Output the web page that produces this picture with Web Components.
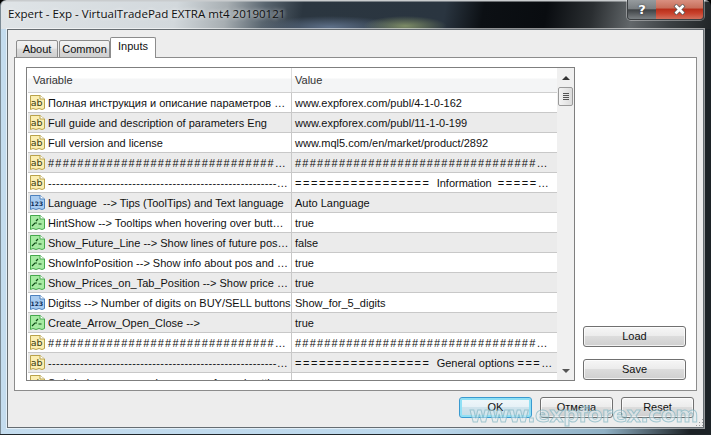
<!DOCTYPE html>
<html>
<head>
<meta charset="utf-8">
<title>Expert</title>
<style>
html, body { margin: 0; padding: 0; background: #000; }
body { width: 711px; height: 435px; overflow: hidden; font-family: "Liberation Sans", sans-serif; }
</style>
</head>
<body>
<mt-window caption="Expert - Exp - VirtualTradePad EXTRA mt4 20190121">
  <mt-tabs></mt-tabs>
  <mt-panel>
    <mt-table></mt-table>
    <mt-button slot="side" label="Load"></mt-button>
    <mt-button slot="side" label="Save"></mt-button>
  </mt-panel>
  <mt-button slot="foot" label="OK" primary></mt-button>
  <mt-button slot="foot" label="Отмена"></mt-button>
  <mt-button slot="foot" label="Reset"></mt-button>
</mt-window>

<script>
// window frame with aero title bar
class MtWindow extends HTMLElement {
    constructor() {
        super();
        const shadowRoot = this.attachShadow({ mode: 'open' });
        shadowRoot.innerHTML = `
            <style>
                :host {
                    display: flex;
                    flex-direction: column;
                    position: relative;
                    width: 711px;
                    height: 435px;
                    box-sizing: border-box;
                    padding: 0 7px 7px 7px;
                    border-radius: 6px 6px 0 0;
                    overflow: hidden;
                    box-shadow: inset 0 -1px #20262a, inset 1px 0 #7b8a94;
                    background:
                        radial-gradient(ellipse 42px 10px at 405px 26px, #7d8c66, transparent),
                        radial-gradient(ellipse 70px 11px at 330px 27px, #5d6f88, transparent),
                        linear-gradient(180deg, #c9ccce 0, #c9ccce 1px, transparent 2px),
                        linear-gradient(100deg, #dfe4e7 0, #d2d8dc 175px, #a7aeb2 225px, #5a6670 262px, #2b3640 300px, #2a3540 440px, #0c1014 478px, #090c10 540px, #2a2e31 585px, #62676a 625px, #3a3f42 665px, #1e2224 711px) 0 0 / 100% 29px no-repeat,
                        linear-gradient(90deg, #c4dcee 0, #bcd8ec 60%, #8fb0c4 85%, #1c2226 97%);
                }
                #bar {
                    height: 29px;
                    flex: none;
                    display: flex;
                    align-items: flex-start;
                    justify-content: space-between;
                }
                #caption {
                    font: 11.55px/1 "Open Sans", sans-serif;
                    color: #111;
                    margin: 8px 0 0 1px;
                    text-shadow: 0 0 4px #fff;
                    white-space: nowrap;
                }
                #ctl {
                    display: flex;
                    height: 20px;
                    box-sizing: border-box;
                    border: 1px solid #3c4043;
                    border-top: 0;
                    border-radius: 0 0 4px 4px;
                    overflow: hidden;
                    box-shadow: 0 0 0 1px rgba(255,255,255,.35);
                }
                #ctl span {
                    display: flex;
                    align-items: center;
                    justify-content: center;
                }
                #help {
                    width: 28px;
                    font: bold 13px/1 "DejaVu Sans", sans-serif;
                    color: #fff;
                    text-shadow: 0 0 2px #333;
                    background: linear-gradient(#969b9e, #7a7f82 45%, #3f4346 52%, #7c8184);
                }
                #close { width: 47px; background: linear-gradient(#d99080, #c8705c 40%, #b9301b 50%, #c9412c 70%, #d2705c); }
                #client {
                    flex: 1;
                    display: flex;
                    flex-direction: column;
                    min-height: 0;
                    background: #ededed;
                    border: 1px solid #666d72;
                    box-shadow: 0 0 0 1px rgba(255,255,255,.55);
                }
                #foot {
                    flex: none;
                    height: 36px;
                    display: flex;
                    justify-content: flex-end;
                    gap: 8px;
                    padding: 6px 9px 0 0;
                    box-sizing: border-box;
                    --btn-w: 73px;
                }
                #mark {
                    position: absolute;
                    right: 13px;
                    bottom: 9px;
                    font: bold 22px/1 "DejaVu Sans", sans-serif;
                    letter-spacing: -.5px;
                    color: rgba(225, 238, 242, .5);
                    -webkit-text-stroke: 1px rgba(125, 178, 192, .65);
                    filter: blur(.5px);
                    white-space: nowrap;
                }
                #grip {
                    position: absolute;
                    right: 8px;
                    bottom: 9px;
                    width: 8px;
                    height: 8px;
                    background: radial-gradient(circle, #9a9a9a 0, #9a9a9a 1px, transparent 1px) 0 0 / 3px 3px;
                    clip-path: polygon(100% 0, 100% 100%, 0 100%);
                }
            </style>
            <div id="bar">
                <div id="caption">${this.getAttribute('caption')}</div>
                <div id="ctl">
                    <span id="help">?</span>
                    <span id="close"><svg width="13" height="11" viewBox="0 0 13 11"><path d="M2 1 L11 10 M11 1 L2 10" stroke="#555" stroke-width="4"/><path d="M2.5 1.5 L10.5 9.5 M10.5 1.5 L2.5 9.5" stroke="#fff" stroke-width="2.6"/></svg></span>
                </div>
            </div>
            <div id="client">
                <slot></slot>
                <div id="foot"><slot name="foot"></slot></div>
            </div>
            <div id="mark">www.expforex.com</div>
            <div id="grip"></div>
        `;
    }
}

// About / Common / Inputs strip
class MtTabs extends HTMLElement {
    constructor() {
        super();
        const shadowRoot = this.attachShadow({ mode: 'open' });
        shadowRoot.innerHTML = `
            <style>
                :host {
                    display: flex;
                    align-items: flex-end;
                    height: 28px;
                    flex: none;
                    padding-left: 8px;
                    box-sizing: border-box;
                    font: 11px/1 "Liberation Sans", sans-serif;
                    color: #111;
                    position: relative;
                    z-index: 1;
                    margin-bottom: -1px;
                }
                div {
                    height: 18px;
                    box-sizing: border-box;
                    display: flex;
                    align-items: center;
                    justify-content: center;
                    border: 1px solid #8c8c8c;
                    border-radius: 2px 2px 0 0;
                    background: linear-gradient(#f2f2f2, #ebebeb 45%, #dcdcdc 50%, #cfcfcf);
                }
                #inputs {
                    height: 21px;
                    padding-bottom: 3px;
                    border-bottom: 0;
                    background: #fff;
                }
            </style>
            <div style="width:42px">About</div>
            <div style="width:51px;margin-left:1px">Common</div>
            <div id="inputs" style="width:46px">Inputs</div>
        `;
    }
}

// white tab page, table at left, Load/Save at right
class MtPanel extends HTMLElement {
    constructor() {
        super();
        const shadowRoot = this.attachShadow({ mode: 'open' });
        shadowRoot.innerHTML = `
            <style>
                :host {
                    display: flex;
                    flex: 1;
                    min-height: 0;
                    margin: 0 6px;
                    padding: 9px 10px 9px 11px;
                    box-sizing: border-box;
                    background: #fff;
                    border: 1px solid #8c8c8c;
                    gap: 8px;
                    --btn-w: 103px;
                }
                #side {
                    display: flex;
                    flex-direction: column;
                    justify-content: flex-end;
                    gap: 12px;
                    flex: none;
                    padding-bottom: 1px;
                }
            </style>
            <slot></slot>
            <div id="side"><slot name="side"></slot></div>
        `;
    }
}

// grid of expert inputs with its scrollbar
class MtTable extends HTMLElement {
    constructor() {
        super();
        const shadowRoot = this.attachShadow({ mode: 'open' });
        const hash = n => '<span class="hash">' + '#'.repeat(n) + '</span>…';
        const dash = '<span class="dash">' + '-'.repeat(57) + '</span>…';
        const eq = n => '<span class="eq">' + '='.repeat(n) + '</span>';
        const rows = [
            ['ab', 'Полная инструкция и описание параметров …', 'www.expforex.com/publ/4-1-0-162'],
            ['ab', 'Full guide and description of parameters Eng', 'www.expforex.com/publ/11-1-0-199'],
            ['ab', 'Full version and license', 'www.mql5.com/en/market/product/2892'],
            ['ab', hash(31), hash(33)],
            ['ab', dash, eq(17) + ' &nbsp;Information &nbsp;' + eq(5) + '…'],
            ['123', 'Language &nbsp;--&gt; Tips (ToolTips) and Text language', 'Auto Language'],
            ['b', 'HintShow --&gt; Tooltips when hovering over butt…', 'true'],
            ['b', 'Show_Future_Line --&gt; Show lines of future pos…', 'false'],
            ['b', 'ShowInfoPosition --&gt; Show info about pos and …', 'true'],
            ['b', 'Show_Prices_on_Tab_Position --&gt; Show price …', 'true'],
            ['123', 'Digitss --&gt; Number of digits on BUY/SELL buttons', 'Show_for_5_digits'],
            ['b', 'Create_Arrow_Open_Close --&gt;', 'true'],
            ['ab', hash(31), hash(33)],
            ['ab', dash, eq(17) + ' &nbsp;General options ' + eq(3) + '…'],
            ['ab', 'Switch_Language --&gt; Language of panel settings', ''],
        ];
        shadowRoot.innerHTML = `
            <style>
                :host {
                    display: block;
                    flex: none;
                    width: 549px;
                    height: 314px;
                    box-sizing: border-box;
                    border: 1px solid #7f7f7f;
                    position: relative;
                    overflow: hidden;
                    background: #fff;
                    font: 11px/1 "Liberation Sans", sans-serif;
                    color: #111;
                }
                #wrap { display: flex; height: 100%; }
                #list { width: 530px; flex: none; overflow: hidden; padding-left: 1px; box-sizing: border-box; }
                #head {
                    display: grid;
                    grid-template-columns: 263px 1fr;
                    height: 25px;
                    border-bottom: 1px solid #cfcfcf;
                    box-sizing: border-box;
                    background: linear-gradient(#fff 0, #fff 10px, #f4f5f6 11px, #f4f5f6 100%);
                    color: #333;
                }
                #head div { display: flex; align-items: center; padding: 1px 0 0 5px; }
                #head div + div { border-left: 1px solid #ddd; padding-left: 3px; }
                .row {
                    display: grid;
                    grid-template-columns: 263px 1fr;
                    height: 20px;
                    box-sizing: border-box;
                    border-bottom: 1px solid #c8c8c8;
                }
                .row:nth-child(even) { background: #ebebeb; }
                .name, .val {
                    display: flex;
                    align-items: center;
                    white-space: nowrap;
                    overflow: hidden;
                }
                .name { padding-left: 1px; gap: 3px; }
                .val { border-left: 1px solid #c8c8c8; padding: 1px 0 0 3px; white-space: pre; display: block; line-height: 18px; }
                .hash { letter-spacing: 1.2px; }
                .dash { letter-spacing: .35px; }
                .eq { letter-spacing: 1.55px; }
                svg { flex: none; display: block; }
                #bar {
                    flex: 1;
                    background: #f0f0f0;
                    position: relative;
                    display: flex;
                    flex-direction: column;
                    justify-content: space-between;
                    align-items: center;
                    padding: 8px 0 7px;
                    box-sizing: border-box;
                }
                #thumb {
                    position: absolute;
                    left: 1px;
                    top: 19px;
                    width: 15px;
                    height: 19px;
                    box-sizing: border-box;
                    border: 1px solid #9a9a9a;
                    border-radius: 2px;
                    background: linear-gradient(90deg, #f4f4f4, #dcdcdc);
                    display: flex;
                    flex-direction: column;
                    align-items: center;
                    justify-content: center;
                    gap: 1px;
                }
                #thumb i { display: block; width: 6px; height: 1px; background: #555; }
                .tri { width: 0; height: 0; border: 4px solid transparent; }
                #up { border-bottom: 4px solid #333; border-top: 0; }
                #down { border-top: 4px solid #555; border-bottom: 0; }
            </style>
            <div id="wrap">
                <div id="list">
                    <div id="head"><div>Variable</div><div>Value</div></div>
                    <div>
                        ${rows.map(r => `<div class="row"><div class="name">${icon(r[0])}<span style="padding-top:1px">${r[1]}</span></div><div class="val">${r[2]}</div></div>`).join('')}
                    </div>
                </div>
                <div id="bar">
                    <div class="tri" id="up"></div>
                    <div id="thumb"><i></i><i></i><i></i><i></i></div>
                    <div class="tri" id="down"></div>
                </div>
            </div>
        `;
    }
}

// note-shaped type icon used on each row
function icon(kind) {
    const c = {
        ab: ['#fbeeb0', '#b9a24a', '#3a3a10'],
        '123': ['#a9ccf0', '#4d81bd', '#10305a'],
        b: ['#a6eaa2', '#46a84c', '#0d4a14'],
    }[kind];
    let inner;
    if (kind === 'ab') {
        inner = `<text x="1.8" y="12.2" font-family="DejaVu Sans" font-size="9.5" fill="${c[2]}">ab</text>`;
    } else if (kind === '123') {
        inner = `<text x="1.6" y="11.5" font-family="DejaVu Sans" font-weight="bold" font-size="6" fill="${c[2]}">123</text>`;
    } else {
        inner = `<path d="M3 12 L6 9 L8 9 M7 7 L9 5 M9.5 10 L12.5 10" stroke="${c[2]}" stroke-width="1.2" fill="none"/>`;
    }
    return `<svg width="16" height="17" viewBox="0 0 16 17">
        <path d="M1.5 1.5 H11 L15.5 5 V14.5 L13 15.5 L10 14.5 L7 15.5 L4 14.5 L1.5 15.5 Z" fill="${c[0]}" stroke="${c[1]}"/>
        <path d="M11 1.5 V5 H15.5" fill="#fff" stroke="${c[1]}"/>
        ${inner}
    </svg>`;
}

// aero style push button
class MtButton extends HTMLElement {
    constructor() {
        super();
        const shadowRoot = this.attachShadow({ mode: 'open' });
        shadowRoot.innerHTML = `
            <style>
                :host {
                    display: flex;
                    align-items: center;
                    justify-content: center;
                    width: var(--btn-w);
                    height: 21px;
                    box-sizing: border-box;
                    border: 1px solid #707070;
                    border-radius: 3px;
                    font: 11px/1 "Liberation Sans", sans-serif;
                    color: #111;
                    background: linear-gradient(#f6f6f6, #ececec 45%, #dcdcdc 50%, #cfcfcf);
                    box-shadow: inset 0 0 0 1px rgba(255,255,255,.7);
                }
                :host([primary]) {
                    border-color: #3a9ad0;
                    box-shadow: inset 0 0 0 2px #8fe0f5;
                    background: linear-gradient(#f0f8fb, #e6f1f6 45%, #cfe3ec 50%, #c4dce6);
                }
            </style>
            ${this.getAttribute('label')}
        `;
    }
}

customElements.define('mt-window', MtWindow);
customElements.define('mt-tabs', MtTabs);
customElements.define('mt-panel', MtPanel);
customElements.define('mt-table', MtTable);
customElements.define('mt-button', MtButton);
</script>
</body>
</html>
